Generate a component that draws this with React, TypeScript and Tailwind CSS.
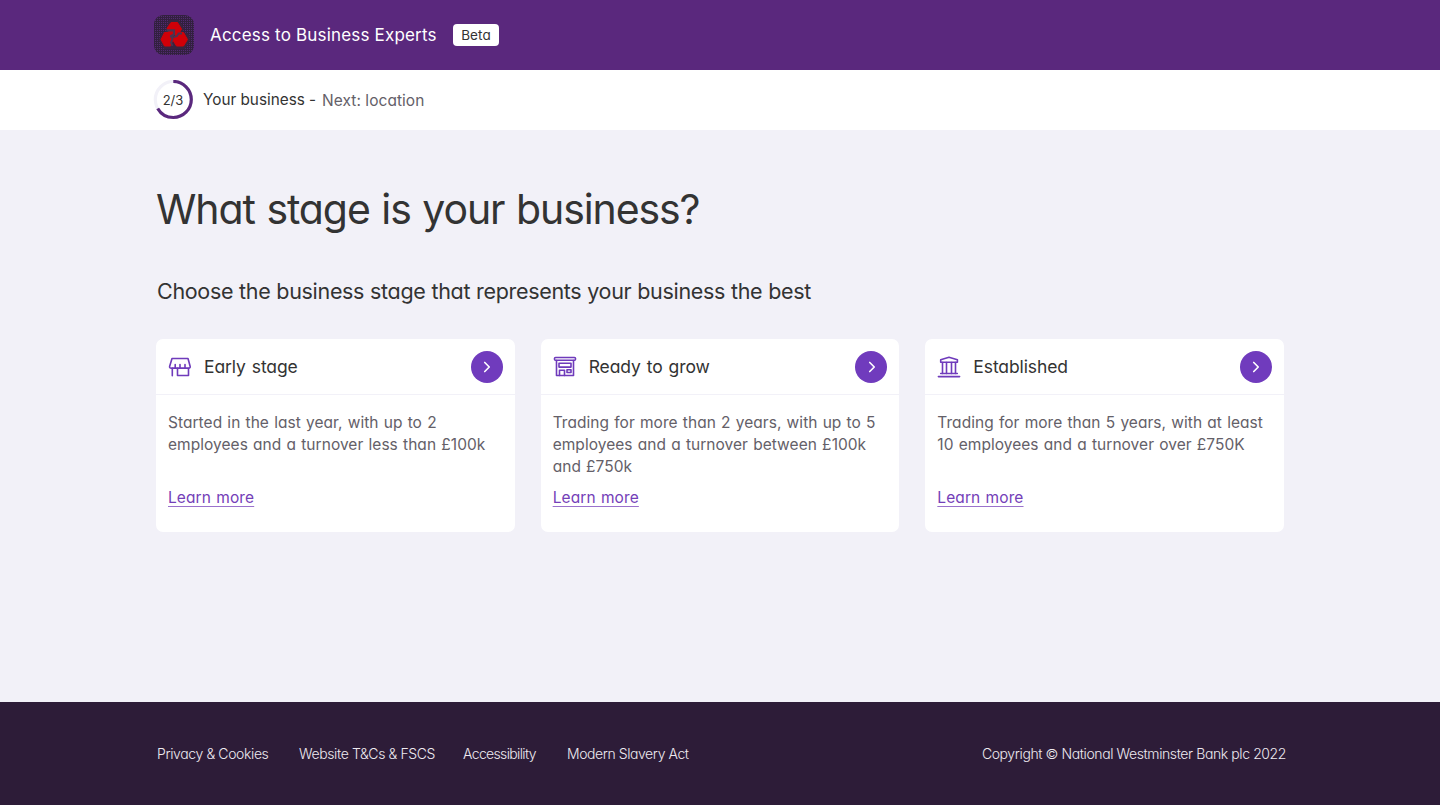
import type { ReactNode } from 'react';
import { ChevronRight } from 'lucide-react';

interface Stage {
  title: string;
  description: string;
  icon: ReactNode;
}

const iconProps = {
  viewBox: '0 0 24 24',
  fill: 'none',
  stroke: 'currentColor',
  strokeWidth: 1.6,
  strokeLinejoin: 'round' as const,
  strokeLinecap: 'round' as const,
  className: 'size-6 shrink-0 text-[#6f3bbb]',
};

function StallIcon() {
  return (
    <svg {...iconProps}>
      <path d="M4 3.5h16l2.200 8c.2 1.300-.8 2-2.200 1.600H4C2.300 13.500 1.300 12.800 1.600 11.500z" />
      <path d="M7.200 9.500v3.300M12 9.500v3.300M17 9.500v3.300" />
      <path d="M4.300 13.200v7.600M9.500 13.200v7.300h11v-7.300" />
    </svg>
  );
}

function ShopIcon() {
  return (
    <svg {...iconProps}>
      <rect x="1.500" y="2.500" width="21" height="2.800" rx="1" />
      <path d="M3.500 5.500v15h17v-15" />
      <rect x="6" y="8.300" width="12" height="3.800" />
      <path d="M6.500 20.500v-5.200h5v5.200" />
      <rect x="14" y="14.700" width="4" height="2.800" />
    </svg>
  );
}

function BankIcon() {
  return (
    <svg {...iconProps}>
      <path d="M3.700 7.300V4.800L12 2.300l8.400 2.500v2.500z" />
      <path d="M5.500 7.500v11M9.500 7.500v11M14.500 7.500v11M18.500 7.500v11" />
      <path d="M3.700 18.500h16.600M1.400 21.600h21.200" />
    </svg>
  );
}

function Logo() {
  return (
    <svg viewBox="0 0 40 40" className="size-10 shrink-0">
      <defs>
        <pattern id="weave" width="2" height="2" patternUnits="userSpaceOnUse">
          <rect width="2" height="2" fill="#32203f" />
          <rect x="1" y="1" width="1" height="1" fill="#522a70" />
        </pattern>
      </defs>
      <rect width="40" height="40" rx="9" fill="url(#weave)" />
      <path d="M15 5h10l5 8-1 4 6 2 1 6-5 9H10l-5-9 2-6 5-3z" fill="#38243f" />
      <g fill="#d00008" stroke="#d00008" strokeLinejoin="round">
        <path d="M17 7.500h6.500l4 6.500-3 5.500h-8L13 13.500z" />
        <path d="M10.500 17.500h6l3 5.500-3 8h-6L7 24.500z" />
        <path d="M23.500 17.500h6l4 7-4 6.500h-7l-4-6.500z" />
      </g>
      <g fill="none" stroke="#4a3450">
        <path d="M12.500 15.300h7.500v4.200l-3.500 2" strokeWidth="2.200" />
        <path d="M16.500 20.500l2 3.500-1.500 3.500 1.500 3.500M18.500 22.500l4.500-1.500 1.500-2.500h3.500" strokeWidth="1.800" />
      </g>
    </svg>
  );
}

function Progress() {
  return (
    <div className="relative flex size-10 items-center justify-center">
      <svg viewBox="0 0 40 40" className="absolute inset-0 size-10 -rotate-90" fill="none" strokeWidth="3.200">
        <circle cx="20.5" cy="20.3" r="18" stroke="#f2f1f8" />
        <circle cx="20.5" cy="20.3" r="18" stroke="#5a287d" pathLength="3" strokeDasharray="2 1" />
      </svg>
      <span className="relative pt-px text-[13px] text-[#333]">2/3</span>
    </div>
  );
}

const stages: Stage[] = [
  {
    title: 'Early stage',
    description: 'Started in the last year, with up to 2 employees and a turnover less than £100k',
    icon: <StallIcon />,
  },
  {
    title: 'Ready to grow',
    description: 'Trading for more than 2 years, with up to 5 employees and a turnover between £100k and £750k',
    icon: <ShopIcon />,
  },
  {
    title: 'Established',
    description: 'Trading for more than 5 years, with at least 10 employees and a turnover over £750K',
    icon: <BankIcon />,
  },
];

function StageCard({ title, description, icon }: Stage) {
  return (
    <article className="h-[193px] rounded-[7px] bg-white">
      <div className="flex h-14 items-center border-b border-[#f2f1f8] px-3">
        {icon}
        <h3 className="ml-3 pt-px text-[17.5px] tracking-[-0.1px] text-[#333] [word-spacing:1.2px]">{title}</h3>
        <button
          aria-label={title}
          className="ml-auto flex size-8 items-center justify-center rounded-full bg-[#703bbd] pl-px text-white"
        >
          <ChevronRight className="size-[18px]" strokeWidth={2.2} />
        </button>
      </div>
      <div className="px-3 pt-[17px] text-[15.5px] leading-[22px] tracking-[0.04px] text-[#646068] [word-spacing:0.8px]">
        <p className="h-[66px]">{description}</p>
        <a
          href="#"
          className="mt-[9px] inline-block tracking-[0.1px] text-[#7440b8] underline decoration-[#9a72cc] decoration-1 underline-offset-[3px]"
        >
          Learn more
        </a>
      </div>
    </article>
  );
}

export default function App() {
  return (
    <div className="flex h-[805px] flex-col bg-[#f2f1f8] font-['Inter','Liberation_Sans',sans-serif] [font-feature-settings:'cv11']">
      <header className="h-[70px] bg-[#5a287d]">
        <div className="mx-auto flex h-full w-[1132px] items-center">
          <Logo />
          <span className="ml-4 w-[227px] whitespace-nowrap pt-0.5 text-[17px] tracking-[0.18px] text-white">
            Access to Business Experts
          </span>
          <span className="ml-4 flex h-[22px] w-[46px] items-center justify-center rounded bg-white text-[13.5px] tracking-[0.1px] text-[#333]">
            Beta
          </span>
        </div>
      </header>

      <div className="h-[60px] bg-white">
        <div className="mx-auto flex h-full w-[1134px] items-center text-[15.5px]">
          <Progress />
          <span className="ml-[10px] w-[113px] whitespace-nowrap text-[15.3px] text-[#333]">Your business -</span>
          <span className="ml-1.5 pt-0.5 tracking-[0.05px] text-[#646068]">Next: location</span>
        </div>
      </div>

      <main className="mx-auto w-[1128px] flex-1">
        <h1 className="mt-[49px] text-[41px] leading-[60px] tracking-[-1.1px] text-[#333] [word-spacing:1.2px]">
          What stage is your business?
        </h1>
        <h2 className="mt-[37px] pl-px text-[21.5px] leading-[30px] tracking-[-0.32px] text-[#333] [word-spacing:0.2px]">
          Choose the business stage that represents your business the best
        </h2>
        <div className="mt-[33px] grid grid-cols-3 gap-[26px]">
          {stages.map((stage) => (
            <StageCard key={stage.title} {...stage} />
          ))}
        </div>
      </main>

      <footer className="h-[103px] bg-[#2d1c38]">
        <div className="mx-auto flex h-full w-[1132px] items-center pb-px text-[14px] font-light tracking-[-0.38px] text-[#eeeaf0]">
          <a href="#" className="ml-[3px] w-[142px]">Privacy & Cookies</a>
          <a href="#" className="w-[164px]">Website T&Cs & FSCS</a>
          <a href="#" className="w-[104px] tracking-[-0.65px]">Accessibility</a>
          <a href="#" className="tracking-[-0.43px]">Modern Slavery Act</a>
          <span className="ml-auto tracking-[-0.4px]">Copyright © National Westminster Bank plc 2022</span>
        </div>
      </footer>
    </div>
  );
}
